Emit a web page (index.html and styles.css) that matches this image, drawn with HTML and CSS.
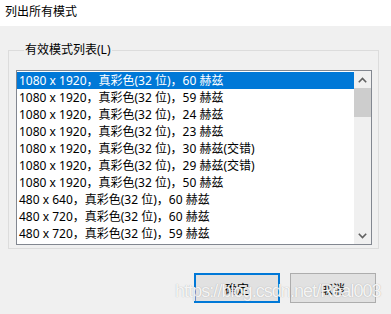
FILE: index.html
```html
<!DOCTYPE html>
<html>
<head>
<meta charset="utf-8">
<link rel="stylesheet" href="styles.css">
</head>
<body>
<div class="window">
  <div class="titlebar">列出所有模式</div>
  <div class="client">
    <fieldset class="group">
      <legend class="group-label">有效模式列表(L)</legend>
      <div class="listbox">
        <ul class="items">
          <li class="item selected">1080 x 1920，真彩色(32 位)，60 赫兹</li>
          <li class="item">1080 x 1920，真彩色(32 位)，59 赫兹</li>
          <li class="item">1080 x 1920，真彩色(32 位)，24 赫兹</li>
          <li class="item">1080 x 1920，真彩色(32 位)，23 赫兹</li>
          <li class="item">1080 x 1920，真彩色(32 位)，30 赫兹(交错)</li>
          <li class="item">1080 x 1920，真彩色(32 位)，29 赫兹(交错)</li>
          <li class="item">1080 x 1920，真彩色(32 位)，50 赫兹</li>
          <li class="item">480 x 640，真彩色(32 位)，60 赫兹</li>
          <li class="item">480 x 720，真彩色(32 位)，60 赫兹</li>
          <li class="item">480 x 720，真彩色(32 位)，59 赫兹</li>
        </ul>
        <div class="scrollbar">
          <div class="arrow">
            <svg width="9" height="6" viewBox="0 0 9 6"><path d="M0.8 5.2 L4.5 1.5 L8.2 5.2" fill="none" stroke="#606060" stroke-width="1.6"/></svg>
          </div>
          <div class="track">
            <div class="thumb"></div>
          </div>
          <div class="arrow">
            <svg width="9" height="6" viewBox="0 0 9 6"><path d="M0.8 0.8 L4.5 4.5 L8.2 0.8" fill="none" stroke="#606060" stroke-width="1.6"/></svg>
          </div>
        </div>
      </div>
    </fieldset>
    <div class="buttons">
      <button class="btn default">确定</button>
      <button class="btn">取消</button>
    </div>
    <div class="watermark">https://blog.csdn.net/Real003</div>
  </div>
</div>
</body>
</html>
```
FILE: styles.css
```css
* { box-sizing: border-box; }
html, body {
  margin: 0;
  padding: 0;
}
body {
  width: 391px;
  height: 314px;
  overflow: hidden;
  font-family: "Noto Sans", "Noto Sans CJK SC", sans-serif;
  font-size: 12px;
  color: #000;
  background: #f0f0f0;
}
.window {
  width: 391px;
  height: 314px;
  display: flex;
  flex-direction: column;
}
.titlebar {
  height: 26px;
  background: #fff;
  padding-left: 5px;
  line-height: 24px;
  font-size: 12px;
  flex: none;
}
.client {
  position: relative;
  flex: 1;
  background: #f0f0f0;
  padding-top: 16px;
}
.group {
  margin: 0 0 0 8px;
  width: 371px;
  border: 1px solid #dcdcdc;
  padding: 12px 6px 3px 7px;
}
.group-label {
  padding: 0 1px;
  margin-left: 8px;
  line-height: 16px;
  font-size: 12px;
}
.listbox {
  width: 356px;
  height: 175px;
  border: 1px solid #828790;
  background: #fff;
  display: flex;
}
.items {
  list-style: none;
  margin: 0;
  padding: 1px 0 0 0;
  flex: 1;
  overflow: hidden;
}
.item {
  height: 17px;
  line-height: 17px;
  padding-left: 2px;
  white-space: nowrap;
}
.item.selected {
  background: #0078d7;
  color: #fff;
}
.scrollbar {
  width: 17px;
  background: #f0f0f0;
  display: flex;
  flex-direction: column;
}
.arrow {
  height: 17px;
  display: flex;
  align-items: center;
  justify-content: center;
  flex: none;
}
.track {
  flex: 1;
}
.thumb {
  height: 29px;
  background: #cdcdcd;
}
.buttons {
  display: flex;
  justify-content: flex-end;
  gap: 10px;
  margin-top: 24px;
  padding-right: 15px;
}
.btn {
  width: 86px;
  height: 30px;
  background: #e1e1e1;
  border: 1px solid #adadad;
  font-family: "Noto Sans CJK SC", sans-serif;
  font-size: 12px;
  color: #000;
  padding: 0;
}
.btn.default {
  border: 2px solid #0078d7;
}
.watermark {
  position: absolute;
  left: 175px;
  top: 255px;
  font-family: "Liberation Sans", sans-serif;
  font-size: 18px;
  letter-spacing: -0.95px;
  color: rgba(255, 255, 255, 0.9);
  text-shadow: 0 0 1px rgba(120, 120, 120, 0.6);
  white-space: nowrap;
}
```
